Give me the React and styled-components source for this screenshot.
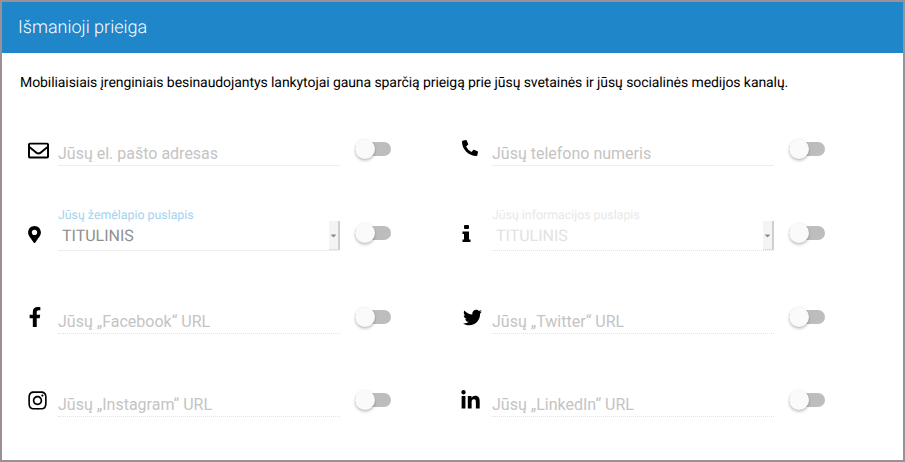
import React from 'react';
import styled, { createGlobalStyle } from 'styled-components';
import { FaRegEnvelope, FaPhoneAlt, FaMapMarkerAlt, FaFacebookF, FaTwitter, FaInstagram, FaLinkedinIn, FaCaretDown } from 'react-icons/fa';

const Global = createGlobalStyle`
  html, body { margin: 0; padding: 0; background: #fff; }
  body { font-family: Roboto, "Liberation Sans", sans-serif; text-rendering: geometricPrecision; }
  * { box-sizing: border-box; }
`;
const Panel = styled.div`
  width: 905px; height: 462px; border: 2px solid #9b9095; background: #fff; overflow: hidden;
`;
const Header = styled.header`
  height: 51px; background: #1e86c9; color: #fff; font-size: 18px; font-weight: 300; padding: 0 16px; display: flex; align-items: center;
`;
const Intro = styled.p`
  margin: 0; padding: 21px 18px 0; font-size: 14px; line-height: 18px; color: #000; letter-spacing: -0.08px;
`;
const Grid = styled.div`
  display: grid; grid-template-columns: 434px 434px; grid-template-rows: 55px 85px 83px 83px; padding: 19px 0 0 18px;
`;
const Field = styled.div`
  display: grid; grid-template-columns: 38px 282px 51px; align-items: end;
`;
const IconCell = styled.div`
  height: 20px; margin-bottom: ${p => p.$bottom}px; margin-left: ${p => p.$left}px; display: flex; align-items: center; font-size: ${p => p.$size}px; color: #000;
`;
const Control = styled.div`
  position: relative; height: 30px; border-bottom: 1px ${p => p.$dotted ? 'dotted #e4e4e4' : 'solid #eeeeee'};
`;
const Input = styled.input`
  width: 100%; height: 29px; border: 0; outline: 0; padding: 6px 0 0; background: transparent; font: 400 16px Roboto, sans-serif; color: #333;
  &::placeholder { color: #c4c4c4; opacity: 1; }
`;
const FloatLabel = styled.label`
  position: absolute; left: 0; top: -12px; font-size: 12.35px; line-height: 14px; color: ${p => p.$disabled ? '#e8e8e8' : '#a6d2ee'}; white-space: nowrap;
`;
const SelectBox = styled.div`
  height: 29px; padding: 5px 0 0 4px; font-size: 16px; line-height: 20px; color: ${p => p.$disabled ? '#e2e2e2' : '#8f8f8f'}; position: relative;
`;
const Spinner = styled.span`
  position: absolute; right: 0; top: 0; width: 11px; height: 100%; background: #f4f4f4; border-right: 2px solid #cfcfcf; border-bottom: 1px solid #dedede; display: flex; align-items: center; justify-content: center; color: #8c8c8c; font-size: 9px;
`;
const Toggle = styled.span`
  position: relative; display: block; width: 36px; height: 14px; margin: 0 0 ${p => p.$raised ? 11 : 10}px 15px; border-radius: 7px; background: #bdbdbd;
  &::after { content: ''; position: absolute; left: 0; top: -3px; width: 20px; height: 20px; border-radius: 50%; background: #fafafa; box-shadow: 0 2px 3px rgba(0,0,0,.22), 0 0 2px rgba(0,0,0,.08); }
`;

const InfoGlyph = () => (
  <svg width="9" height="17" viewBox="0 0 9 17" fill="currentColor">
    <rect x="2" y="0" width="5" height="4" rx="1" />
    <path d="M0.5 6.5H7V14.5H8.5V17H0.5V14.5H2V9H0.5Z" />
  </svg>
);

const fields = [
  { Icon: FaRegEnvelope, ph: 'Jūsų el. pašto adresas', size: 21, left: 8, bottom: 6 },
  { Icon: FaPhoneAlt, ph: 'Jūsų telefono numeris', size: 16, left: 8, bottom: 8 },
  { Icon: FaMapMarkerAlt, label: 'Jūsų žemėlapio puslapis', select: true, size: 17, left: 6, bottom: 7 },
  { Icon: InfoGlyph, label: 'Jūsų informacijos puslapis', select: true, disabled: true, size: 18, left: 8, bottom: 8 },
  { Icon: FaFacebookF, ph: 'Jūsų „Facebook“ URL', dotted: true, size: 20, left: 5, bottom: 7 },
  { Icon: FaTwitter, ph: 'Jūsų „Twitter“ URL', dotted: true, size: 19, left: 9, bottom: 7 },
  { Icon: FaInstagram, ph: 'Jūsų „Instagram“ URL', dotted: true, size: 21, left: 7, bottom: 7 },
  { Icon: FaLinkedinIn, ph: 'Jūsų „LinkedIn“ URL', dotted: true, size: 21, left: 6, bottom: 7 },
];

export default function App() {
  return (
    <>
      <Global />
      <Panel>
        <Header>Išmanioji prieiga</Header>
        <Intro>Mobiliaisiais įrenginiais besinaudojantys lankytojai gauna sparčią prieigą prie jūsų svetainės ir jūsų socialinės medijos kanalų.</Intro>
        <Grid>
          {fields.map(({ Icon, ph, label, select, disabled, dotted, size, left, bottom }) => (
            <Field key={ph || label}>
              <IconCell $size={size} $left={left} $bottom={bottom}><Icon /></IconCell>
              <Control $dotted={dotted || disabled}>
                {select ? (
                  <>
                    <FloatLabel $disabled={disabled}>{label}</FloatLabel>
                    <SelectBox $disabled={disabled}>TITULINIS<Spinner><FaCaretDown /></Spinner></SelectBox>
                  </>
                ) : (
                  <Input placeholder={ph} />
                )}
              </Control>
              <Toggle $raised={select} />
            </Field>
          ))}
        </Grid>
      </Panel>
    </>
  );
}
